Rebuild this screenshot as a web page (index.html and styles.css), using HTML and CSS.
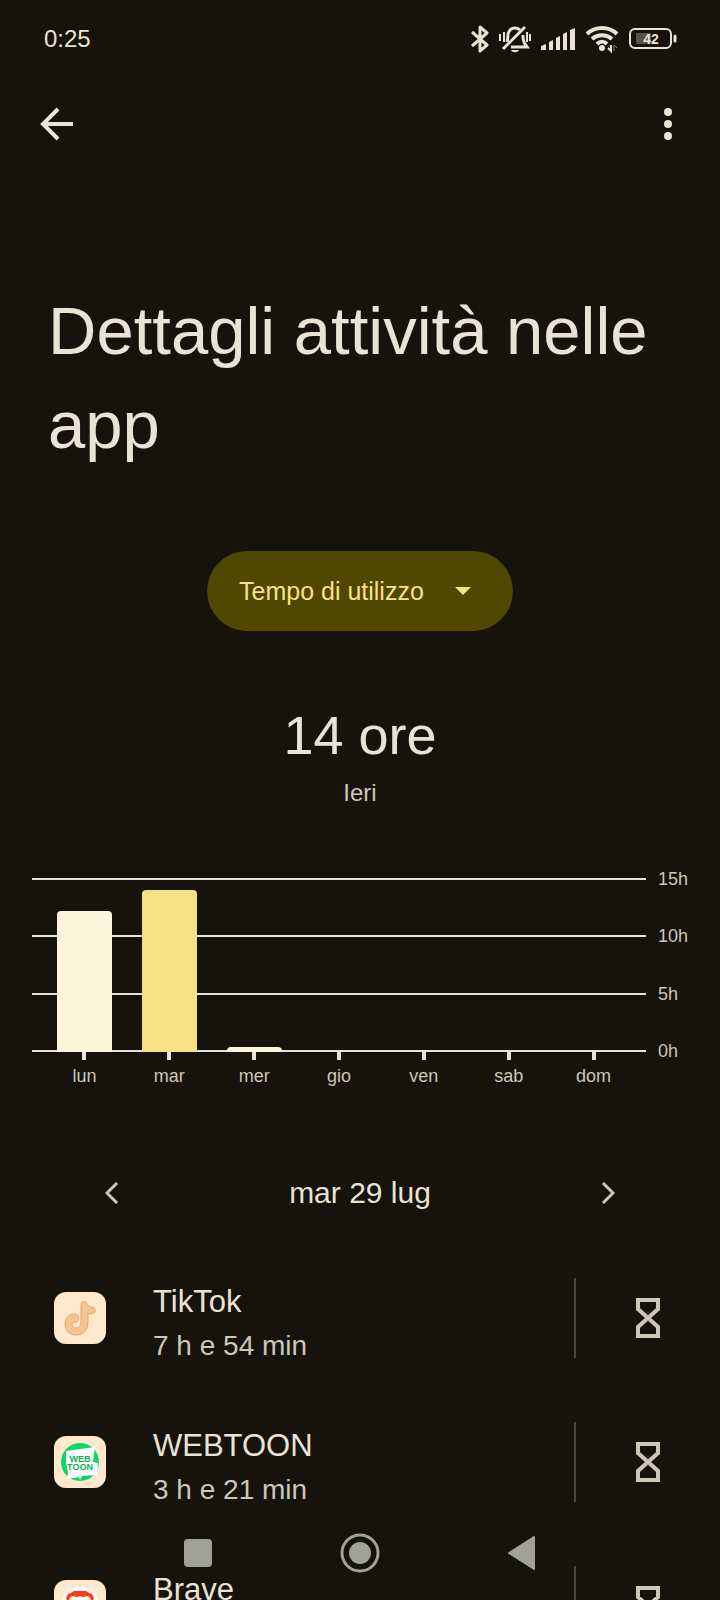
FILE: index.html
```html
<!doctype html>
<html lang="it">
<head>
  <meta charset="utf-8" />
  <meta name="viewport" content="width=device-width,initial-scale=1" />
  <title>Dettagli attività nelle app</title>
  <link rel="stylesheet" href="styles.css">
</head>
<body>
  <!-- Status bar -->
  <div class="status">
    <span class="clock">0:25</span>
    <div class="status-icons">
      <svg width="18" height="30" viewBox="0 0 18 30" fill="none" stroke="currentColor" stroke-width="3" stroke-linejoin="round"><path d="M1 8l15 13-7 6V3l7 6L1 22"/></svg>
      <svg width="32" height="30" viewBox="0 0 32 30" fill="none" stroke="currentColor" stroke-width="2">
        <path d="M8 18c1-3 1-5 1-8 1-4 3-6 7-6 2 0 4 1 5 2M24 11c0 6 1 8 4 12H12" stroke-width="3"/>
        <path d="M4 25L26 3" stroke-width="3"/>
        <path d="M1 10v7M5 8v10M28 8v10M31 10v7"/>
        <path d="M12 26h8c-1 3-7 3-8 0z" fill="currentColor" stroke="none"/>
      </svg>
      <svg width="34" height="30" viewBox="0 0 34 30" fill="currentColor">
        <path d="M0 22l5-2v6H0zM8 18l4-2v10H8zM15 14l4-2v14h-4zM22 10l4-2v18h-4zM29 6l5-2v22h-5z"/>
      </svg>
      <svg width="34" height="30" viewBox="0 0 34 30" fill="none" stroke="currentColor" stroke-width="4">
        <path d="M2 10c8-8 22-8 30 0M7 15c6-5 14-5 20 0M12 20c3-3 7-3 10 0"/>
        <circle cx="17" cy="24" r="3" fill="currentColor" stroke="none"/>
        <path d="M26 21v6l-3-3" stroke-width="2"/><path d="M29 27v-6l3 3" stroke-width="1" opacity=".5"/>
      </svg>
      <svg width="48" height="30" viewBox="0 0 48 30" fill="none" stroke="currentColor" stroke-width="2">
        <rect x="1" y="5" width="41" height="19" rx="5"/>
        <rect x="7" y="9" width="15" height="11" rx="1" fill="#55534d" stroke="none"/>
        <path d="M46 12v5" stroke-width="3" stroke-linecap="round"/>
        <text x="22" y="20" class="battery-text">42</text>
      </svg>
    </div>
  </div>

  <header class="app-bar">
    <button class="icon-btn" aria-label="Indietro">
      <svg width="34" height="34" viewBox="0 0 34 34" fill="none" stroke="currentColor" stroke-width="4"><path d="M18 2L3 17l15 15M3 17h30"/></svg>
    </button>
    <button class="icon-btn" aria-label="Altre opzioni">
      <svg width="8" height="34" viewBox="0 0 8 34" fill="currentColor"><circle cx="4" cy="5" r="4"/><circle cx="4" cy="17" r="4"/><circle cx="4" cy="29" r="4"/></svg>
    </button>
  </header>

  <main>
    <h1>Dettagli attività nelle app</h1>

    <div class="picker">
      <select aria-label="Tipo di dati">
        <option>Tempo di utilizzo</option>
      </select>
      <svg class="caret" width="16" height="8" viewBox="0 0 16 8" fill="currentColor"><path d="M0 0h16L8 8z"/></svg>
    </div>

    <div class="total">
      <p class="total-value">14 ore</p>
      <p class="total-day">Ieri</p>
    </div>

    <!-- Weekly chart -->
    <div class="chart">
      <div class="plot">
        <div class="lines"><i></i><i></i><i></i><i></i></div>
        <div class="bars">
          <div class="col"><div class="bar" style="height:81%"></div></div>
          <div class="col"><div class="bar selected" style="height:93%"></div></div>
          <div class="col"><div class="bar" style="height:3%"></div></div>
          <div class="col"></div>
          <div class="col"></div>
          <div class="col"></div>
          <div class="col"></div>
        </div>
      </div>
      <div class="axis-y"><span>15h</span><span>10h</span><span>5h</span><span>0h</span></div>
      <div class="axis-x"><span>lun</span><span>mar</span><span>mer</span><span>gio</span><span>ven</span><span>sab</span><span>dom</span></div>
    </div>

    <div class="date-nav">
      <button class="icon-btn" aria-label="Giorno precedente">
        <svg width="14" height="22" viewBox="0 0 14 22" fill="none" stroke="currentColor" stroke-width="3"><path d="M12 1L2 11l10 10"/></svg>
      </button>
      <span>mar 29 lug</span>
      <button class="icon-btn" aria-label="Giorno successivo">
        <svg width="14" height="22" viewBox="0 0 14 22" fill="none" stroke="currentColor" stroke-width="3"><path d="M2 1l10 10L2 21"/></svg>
      </button>
    </div>

    <ul class="apps">
      <li class="app">
        <svg class="app-icon" viewBox="0 0 52 52">
          <rect width="52" height="52" rx="12" fill="#ffe8cc"/>
          <path d="M27 13c0-5 5-4 6-1 1 2 3 3 5 3 5 1 4 7-1 7l-3-1v9c0 8-5 13-12 13s-11-5-11-11 4-10 9-10c6 0 6 7 2 8-3 0-4 1-4 3s2 3 3 3c4 0 6-3 6-6z" fill="#f5c48c" stroke="#d9a777" stroke-width="1"/>
        </svg>
        <div class="app-text">
          <h2>TikTok</h2>
          <p>7 h e 54 min</p>
        </div>
        <button class="timer" aria-label="Timer per TikTok">
          <svg width="24" height="40" viewBox="0 0 24 40" fill="none" stroke="currentColor" stroke-width="4"><path d="M2 2h20v9L12 20 2 11zM2 38h20v-9L12 20 2 29z"/></svg>
        </button>
      </li>
      <li class="app">
        <svg class="app-icon" viewBox="0 0 52 52">
          <rect width="52" height="52" rx="12" fill="#ffe8cc"/>
          <circle cx="26" cy="26" r="19" fill="#0fd466"/>
          <path d="M12 15l29-4-2 15 5 1-1 12-15 1-2 4-1-3-12 2 1-7-2-9z" fill="#fff"/>
          <text x="26" y="26" class="logo-text">WEB</text>
          <text x="26" y="34" class="logo-text">TOON</text>
        </svg>
        <div class="app-text">
          <h2>WEBTOON</h2>
          <p>3 h e 21 min</p>
        </div>
        <button class="timer" aria-label="Timer per WEBTOON">
          <svg width="24" height="40" viewBox="0 0 24 40" fill="none" stroke="currentColor" stroke-width="4"><path d="M2 2h20v9L12 20 2 11zM2 38h20v-9L12 20 2 29z"/></svg>
        </button>
      </li>
      <li class="app">
        <svg class="app-icon" viewBox="0 0 52 52">
          <rect width="52" height="52" rx="12" fill="#ffe8cc"/>
          <circle cx="26" cy="26" r="19" fill="#fff"/>
          <path d="M20 11h12l3 2 3 1 2 4-2 4-3 14-9 7-9-7-3-14-2-4 2-4 3-1z" fill="#fb3d12"/>
          <path d="M15 19l3-3 5 1 3-1 3 1 5-1 3 3-3 8-8 9-8-9z" fill="#fff"/>
        </svg>
        <div class="app-text">
          <h2>Brave</h2>
        </div>
        <button class="timer" aria-label="Timer per Brave">
          <svg width="24" height="40" viewBox="0 0 24 40" fill="none" stroke="currentColor" stroke-width="4"><path d="M2 2h20v9L12 20 2 11zM2 38h20v-9L12 20 2 29z"/></svg>
        </button>
      </li>
    </ul>
  </main>

  <!-- System navigation, floats over the list -->
  <nav class="sys-nav">
    <button class="icon-btn" aria-label="Recenti"><svg width="40" height="40" viewBox="0 0 40 40" fill="currentColor"><rect x="6" y="6" width="28" height="28" rx="4"/></svg></button>
    <button class="icon-btn" aria-label="Home"><svg width="40" height="40" viewBox="0 0 40 40" fill="currentColor"><circle cx="20" cy="20" r="11"/><circle cx="20" cy="20" r="18" fill="none" stroke="currentColor" stroke-width="3"/></svg></button>
    <button class="icon-btn" aria-label="Indietro"><svg width="40" height="40" viewBox="0 0 40 40" fill="currentColor" stroke="currentColor" stroke-width="2" stroke-linejoin="round"><path d="M7 20L32 4v32z"/></svg></button>
  </nav>
</body>
</html>
```

FILE: styles.css
```css
:root {
  --bg: #15130c;
  --text: #e9e3d5;
  --muted: #cdc7b7;
  --accent: #f5e287;
  font-family: "Liberation Sans", Arial, sans-serif;
}
* { box-sizing:border-box; }
body {
  margin:0; height:100vh; overflow:hidden;
  display:flex; flex-direction:column;
  background:var(--bg); color:var(--text);
}
h1, h2, p, ul { margin:0; padding:0; font-weight:normal; }
svg { display:block; flex:none; }
button { background:none; border:none; padding:0; color:inherit; font:inherit; cursor:pointer; }

/* Status bar */
.status {
  display:flex; justify-content:space-between; align-items:center;
  flex:none; height:78px; padding:0 43px 0 44px;
}
.clock { font-size:24px; }
.status-icons { display:flex; gap:10px; }
.battery-text { font-size:14px; font-weight:bold; fill:var(--text); stroke:none; text-anchor:middle; }

.app-bar {
  display:flex; justify-content:space-between; align-items:center;
  flex:none; height:92px; padding:0 48px 0 40px;
}

main { flex:1; min-height:0; overflow:hidden; }
h1 { padding:114px 40px 0 48px; font-size:67px; line-height:94px; }

/* Data type drop-down */
.picker { display:grid; width:306px; margin:79px auto 0; color:var(--accent); }
.picker select {
  grid-area:1 / 1; height:80px; padding:0 32px;
  appearance:none; border:none; border-radius:40px;
  background:#504700; color:inherit; font:inherit; font-size:25px;
}
.caret { grid-area:1 / 1; place-self:center end; margin-right:42px; pointer-events:none; }

.total { margin-top:66px; text-align:center; }
.total-value { font-size:54px; line-height:76px; }
.total-day { font-size:24px; line-height:40px; color:var(--muted); }

/* Chart */
.chart {
  display:grid; grid-template-columns:1fr 42px;
  margin-top:65px; padding:0 32px;
  font-size:18px; line-height:24px; color:var(--muted);
}
.plot { display:grid; height:174px; }
.lines { grid-area:1 / 1; display:flex; flex-direction:column; justify-content:space-between; }
.lines i { height:2px; background:#e6e1da; }
.bars { grid-area:1 / 1; display:flex; padding:0 10px; }
.col { flex:1; display:flex; align-items:flex-end; justify-content:center; }
.bar { width:65%; background:#fcf6dc; border-radius:4px 4px 0 0; }
.bar.selected { background:var(--accent); }
.axis-y { display:flex; flex-direction:column; justify-content:space-between; margin:-11px 0; padding-left:12px; }
.axis-x { display:flex; padding:0 10px; }
.axis-x span { flex:1; text-align:center; }
.axis-x span::before {
  content:""; display:block; width:4px; height:8px;
  margin:0 auto 4px; background:#e6e1da;
}

.date-nav {
  display:flex; justify-content:space-between; align-items:center;
  height:60px; margin-top:75px; padding:0 105px;
  font-size:30px;
}
.date-nav .icon-btn { color:var(--muted); }

/* App list */
.apps { list-style:none; margin-top:23px; }
.app { display:flex; align-items:center; height:144px; padding-left:54px; }
.app-icon { width:52px; height:52px; }
.logo-text { font-size:9px; font-weight:bold; fill:#0bb457; text-anchor:middle; }
.app-text { flex:1; height:80px; margin-left:47px; }
.app h2 { font-size:31px; line-height:48px; }
.app p { font-size:28px; line-height:40px; color:var(--muted); }
.timer {
  display:flex; align-items:center; justify-content:center;
  width:146px; height:80px; border-left:2px solid #4a473d; color:var(--muted);
}

.sys-nav {
  position:fixed; left:0; right:0; bottom:0; height:94px;
  display:flex; justify-content:center; align-items:center; gap:122px;
  color:#a0a19b;
}
```
